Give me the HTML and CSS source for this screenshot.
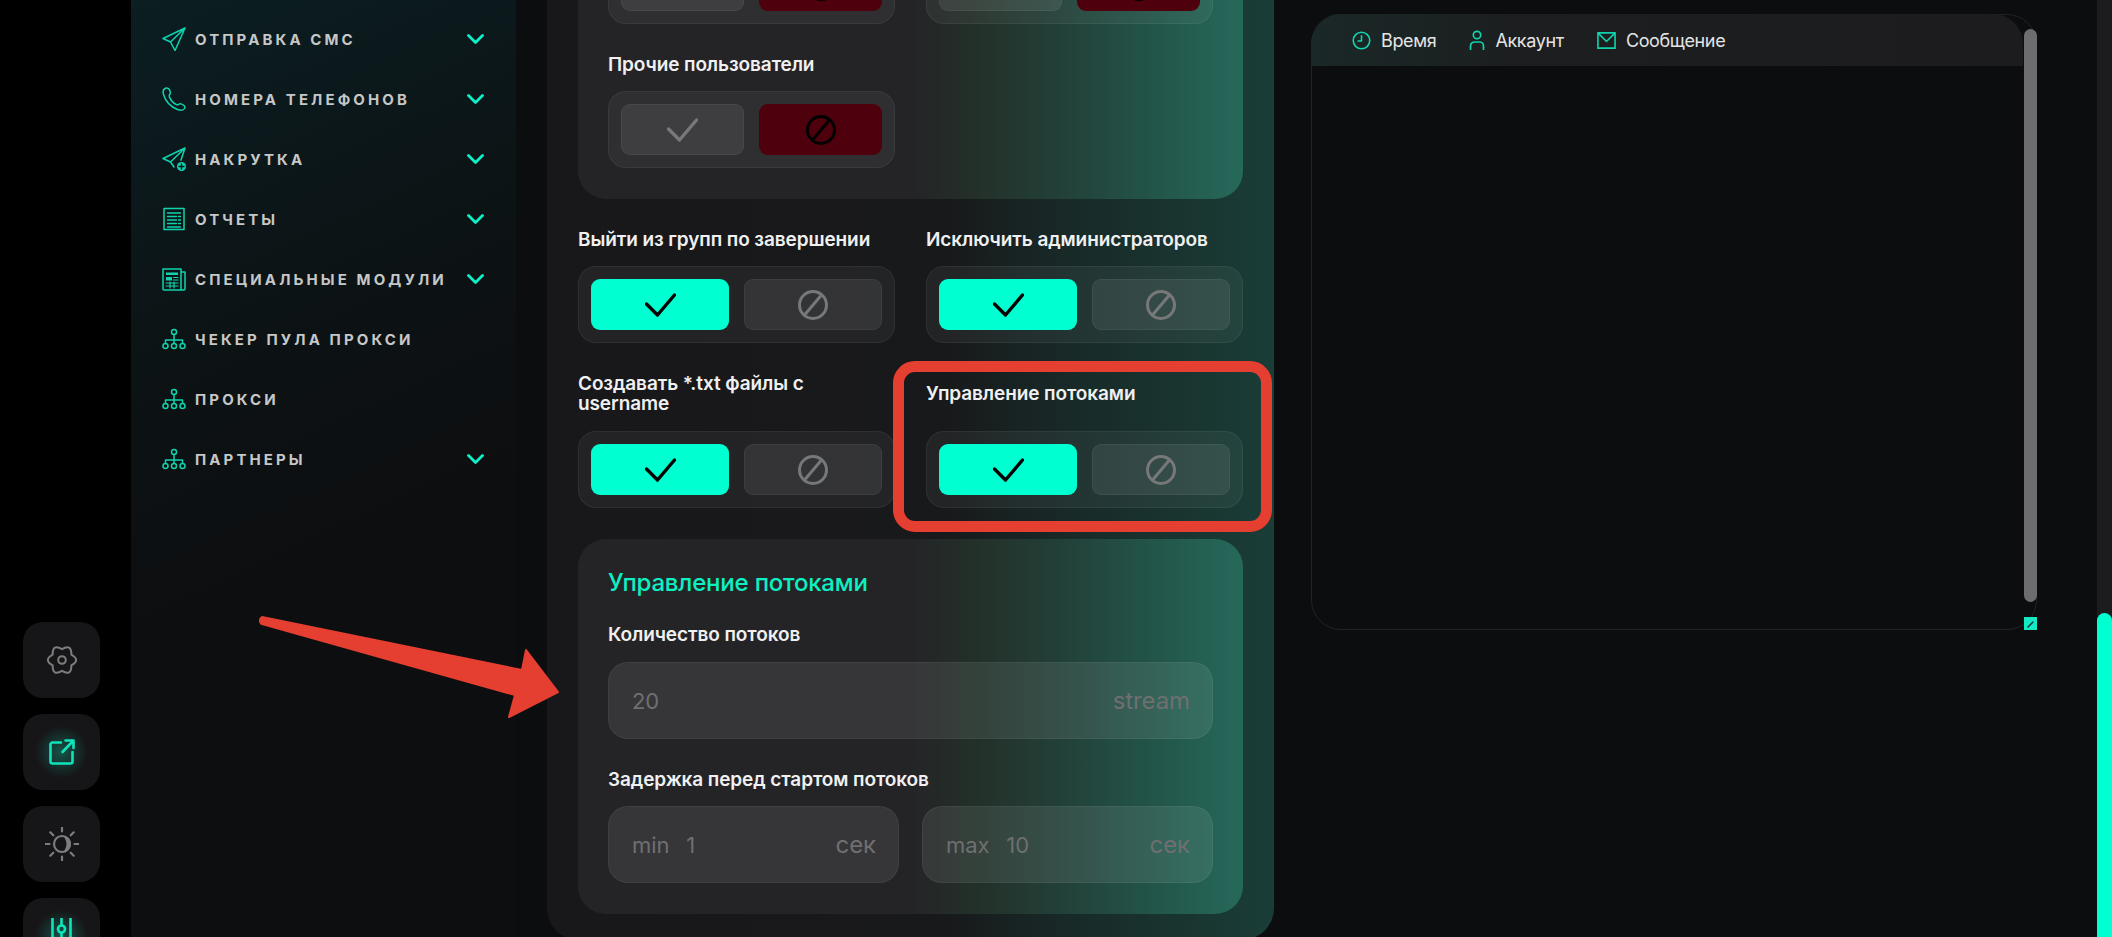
FILE: index.html
```html
<!DOCTYPE html>
<html lang="ru">
<head>
<meta charset="utf-8">
<title>Управление потоками</title>
<link rel="stylesheet" href="styles.css">
</head>
<body>
<svg class="defs" width="0" height="0" aria-hidden="true">
  <symbol id="i-plane" viewBox="0 0 24 24"><path d="M23 1 1 11.500 8.500 15 13 23.500ZM23 1 8.500 15"/></symbol>
  <symbol id="i-phone" viewBox="0 0 24 24"><path d="M3.500 1.200C1.200 2.200.6 4.500 1.500 7.500c2 6.500 7.500 12.500 14 15 3 1 6 .8 7-1 1-2-.5-3.600-3.500-4.600-2.200-.7-2.700 1.600-4.600.7-3-1.500-5.700-4.500-7.100-8-.7-1.900 1.500-2.200 1-4.500C7.700 2 5.500.4 3.500 1.200Z"/></symbol>
  <symbol id="i-plane-plus" viewBox="0 0 24 24"><path d="M23 1 1 11.500 8.500 15 12 20M23 1 8.500 15M23 1l-4 12"/><circle class="solid" cx="19.500" cy="19.500" r="4.500"/><path class="cut" d="M19.500 17v5M17 19.500h5"/></symbol>
  <symbol id="i-receipt" viewBox="0 0 24 24"><path d="M2 1.500h20v21H2Z" stroke-dasharray="2 .3"/><path d="M5.500 6h13M5.500 9.500h9M5.500 13h9M5.500 16.500h9M5.500 20h13M16.500 9.500h2M16.500 13h2M16.500 16.500h2" stroke-width="1.300"/></symbol>
  <symbol id="i-news" viewBox="0 0 24 24"><path d="M1 2h18v21H2a1 1 0 0 1-1-1ZM19 5h4v17a1 1 0 0 1-1 1h-3"/><path class="solid" d="M4 5.500h12v2.500H4ZM4 10h6v3.500H4Z"/><path d="M11.500 10.500H16M11.500 13H16M4 16h12M4 19h12M8 15v6M12 15v6" stroke-width="1.200"/></symbol>
  <symbol id="i-org" viewBox="0 0 24 24"><circle cx="12" cy="5" r="2.500"/><path d="M12 7.500V13M3.500 16v-3h17v3M12 13v3"/><circle cx="3.500" cy="19" r="2.500"/><circle cx="12" cy="19" r="2.500"/><circle cx="20.500" cy="19" r="2.500"/></symbol>
  <symbol id="i-check" viewBox="0 0 31 24"><path d="M1.500 11 12.500 22 29.500 2"/></symbol>
  <symbol id="i-ban" viewBox="0 0 30 30"><circle cx="15" cy="15" r="13.500"/><path d="M23.500 5 6.500 25"/></symbol>
  <symbol id="i-gear" viewBox="0 0 30 30"><path d="M24.350 9.600Q34 15 24.350 20.400 24.500 31.450 15 25.800 5.500 31.450 5.650 20.400-4 15 5.650 9.600 5.500-1.450 15 4.200 24.500-1.450 24.350 9.600Z"/><circle cx="15" cy="15" r="3.800"/></symbol>
  <symbol id="i-link" viewBox="0 0 26 26"><path d="M12 3.500H3.500a2 2 0 0 0-2 2v17a2 2 0 0 0 2 2h18a2 2 0 0 0 2-2V13"/><path d="M13.500 13 24 2M16.500 1.500H24.500V9"/></symbol>
  <symbol id="i-sun" viewBox="0 0 34 34"><circle cx="17" cy="17" r="8"/><path class="solid" d="M18 9a8 8 0 0 1 0 16 11 11 0 0 0 0-16Z"/><path d="M17 .5v4M17 29.500v4M.5 17h4M29.500 17h4M5.300 5.300l3 3M25.700 25.700l3 3M5.300 28.700l3-3M25.700 8.300l3-3"/></symbol>
  <symbol id="i-sliders" viewBox="0 0 26 26"><path d="M3.500 0v19M12.500 0v7M12.500 15v11M21.500 0v19"/><circle cx="12.500" cy="11" r="3.500"/><circle class="solid" cx="3.500" cy="22" r="3.500"/><circle class="solid" cx="21.500" cy="22" r="3.500"/></symbol>
  <symbol id="i-clock" viewBox="0 0 20 20"><circle cx="10" cy="10" r="8.700"/><path d="M10 5v5.500H6.500"/></symbol>
  <symbol id="i-user" viewBox="0 0 16 20"><circle cx="8" cy="5" r="3.700"/><path d="M1.500 19.500V16a4 4 0 0 1 4-4h5a4 4 0 0 1 4 4v3.500"/></symbol>
  <symbol id="i-mail" viewBox="0 0 20 20"><path d="M1 2h18v16H1ZM1.500 2.500 10 11l8.500-8.500"/></symbol>
  <symbol id="i-chev" viewBox="0 0 17 11"><path d="M1.500 1.500 8.500 8.500 15.500 1.500"/></symbol>
</svg>

<div class="app">
  <nav class="rail">
    <a class="rail-btn"><svg class="rail-ico gear"><use href="#i-gear"/></svg></a>
    <a class="rail-btn active"><svg class="rail-ico link"><use href="#i-link"/></svg></a>
    <a class="rail-btn"><svg class="rail-ico sun"><use href="#i-sun"/></svg></a>
    <a class="rail-btn active top"><svg class="rail-ico link"><use href="#i-sliders"/></svg></a>
  </nav>

  <aside class="side">
    <a class="item"><svg class="ico"><use href="#i-plane"/></svg><span>Отправка СМС</span><svg class="chev"><use href="#i-chev"/></svg></a>
    <a class="item"><svg class="ico"><use href="#i-phone"/></svg><span>Номера телефонов</span><svg class="chev"><use href="#i-chev"/></svg></a>
    <a class="item"><svg class="ico"><use href="#i-plane-plus"/></svg><span>Накрутка</span><svg class="chev"><use href="#i-chev"/></svg></a>
    <a class="item"><svg class="ico"><use href="#i-receipt"/></svg><span>Отчеты</span><svg class="chev"><use href="#i-chev"/></svg></a>
    <a class="item"><svg class="ico"><use href="#i-news"/></svg><span>Специальные модули</span><svg class="chev"><use href="#i-chev"/></svg></a>
    <a class="item"><svg class="ico"><use href="#i-org"/></svg><span>Чекер пула прокси</span></a>
    <a class="item"><svg class="ico"><use href="#i-org"/></svg><span>Прокси</span></a>
    <a class="item"><svg class="ico"><use href="#i-org"/></svg><span>Партнеры</span><svg class="chev"><use href="#i-chev"/></svg></a>
  </aside>

  <main class="main">
    <section class="panel">
      <div class="card rows">
        <div class="grid">
          <div class="seg"><button class="opt off"><svg class="chk"><use href="#i-check"/></svg></button><button class="opt deny"><svg class="ban"><use href="#i-ban"/></svg></button></div>
          <div class="seg"><button class="opt off"><svg class="chk"><use href="#i-check"/></svg></button><button class="opt deny"><svg class="ban"><use href="#i-ban"/></svg></button></div>
        </div>
        <div class="grid">
          <div class="field">
            <div class="label">Прочие пользователи</div>
            <div class="seg"><button class="opt off"><svg class="chk"><use href="#i-check"/></svg></button><button class="opt deny"><svg class="ban"><use href="#i-ban"/></svg></button></div>
          </div>
        </div>
      </div>

      <div class="grid outer">
        <div class="field">
          <div class="label">Выйти из групп по завершении</div>
          <div class="seg"><button class="opt on"><svg class="chk"><use href="#i-check"/></svg></button><button class="opt off"><svg class="ban"><use href="#i-ban"/></svg></button></div>
        </div>
        <div class="field">
          <div class="label">Исключить администраторов</div>
          <div class="seg"><button class="opt on"><svg class="chk"><use href="#i-check"/></svg></button><button class="opt off"><svg class="ban"><use href="#i-ban"/></svg></button></div>
        </div>
      </div>

      <div class="grid outer">
        <div class="field">
          <div class="label two">Создавать *.txt файлы с<br>username</div>
          <div class="seg"><button class="opt on"><svg class="chk"><use href="#i-check"/></svg></button><button class="opt off"><svg class="ban"><use href="#i-ban"/></svg></button></div>
        </div>
        <div class="field marked">
          <div class="label two mid">Управление потоками</div>
          <div class="seg"><button class="opt on"><svg class="chk"><use href="#i-check"/></svg></button><button class="opt off"><svg class="ban"><use href="#i-ban"/></svg></button></div>
        </div>
      </div>

      <div class="card">
        <h2 class="title">Управление потоками</h2>
        <div class="label lead">Количество потоков</div>
        <div class="input"><span class="val">20</span><span class="unit">stream</span></div>
        <div class="label gap-top">Задержка перед стартом потоков</div>
        <div class="grid tight">
          <div class="input"><span class="pre">min</span><span class="val">1</span><span class="unit">сек</span></div>
          <div class="input"><span class="pre">max</span><span class="val">10</span><span class="unit">сек</span></div>
        </div>
      </div>
    </section>

    <section class="log">
      <header class="tabs">
        <span class="tab"><svg class="t-ico clock"><use href="#i-clock"/></svg>Время</span>
        <span class="tab"><svg class="t-ico user"><use href="#i-user"/></svg>Аккаунт</span>
        <span class="tab"><svg class="t-ico mail"><use href="#i-mail"/></svg>Сообщение</span>
      </header>
      <div class="thumb"></div>
      <div class="grip"><svg viewBox="0 0 13 13"><path d="M4 10 9 5"/></svg></div>
    </section>
  </main>

  <div class="pagebar"><div class="pagethumb"></div></div>
</div>

<svg class="arrow" viewBox="0 0 320 120" aria-hidden="true"><path d="M3 2 263 55 267 35 299 77 250 102 256 80 3 9a4 4 0 0 1 0-7Z"/></svg>
</body>
</html>
```
FILE: styles.css
```css
* { box-sizing: border-box; }
html, body { margin: 0; height: 100%; background: #000; overflow: hidden; }
body { font-family: Inter, "Noto Sans", sans-serif; color: #e9e9ea; position: relative; }
.defs { position: absolute; }
svg { fill: none; stroke: currentColor; stroke-linecap: round; stroke-linejoin: round; display: block; }
.solid { fill: currentColor; stroke: none; }
.cut { stroke: #0c1416; stroke-width: 1.4; }

.app { display: flex; height: 937px; overflow: hidden; }

/* left rail */
.rail { width: 131px; flex: none; background: #000; display: flex; flex-direction: column; align-items: flex-start; gap: 16px; padding: 622px 0 0 23px; }
.rail-btn { width: 77px; height: 76px; flex: none; border-radius: 20px; background: #161618; display: flex; align-items: center; justify-content: center; color: #7d7d7d; }
.rail-btn.active { color: #0fe3ba; background: radial-gradient(circle at 50% 50%, rgba(15,227,186,.3), rgba(15,227,186,0) 48%), #161618; }
.rail-btn.top { align-items: flex-start; padding-top: 20px; }
.rail-ico { stroke-width: 2; }
.rail-ico.gear { width: 30px; height: 30px; }
.rail-ico.link { width: 26px; height: 26px; stroke-width: 2.600; }
.rail-ico.sun { width: 34px; height: 34px; stroke-width: 2.200; }

/* sidebar */
.side { width: 385px; flex: none; padding: 9px 32px 0 31px; background: linear-gradient(155deg, #0b1e22 0%, #0c1416 30%, #0d0e10 58%); }
.item { height: 60px; display: flex; align-items: center; gap: 9px; color: #c6c7c7; font-size: 15px; font-weight: 700; letter-spacing: 3.100px; text-transform: uppercase; white-space: nowrap; }
.ico { width: 24px; height: 24px; flex: none; color: #0fd3ad; stroke-width: 1.500; }
.chev { width: 17px; height: 11px; margin-left: auto; color: #0ff0c8; stroke-width: 2.800; }

/* main */
.main { flex: 1; display: flex; align-items: flex-start; background: #0c0d0e; padding-left: 31px; gap: 37px; }

.panel { width: 727px; flex: none; margin-top: -83px; padding: 0 31px 26px; display: flex; flex-direction: column; gap: 31px; border-radius: 0 0 32px 32px; background: linear-gradient(90deg, #18181b 0%, #18191b 55%, #182a28 72%, #1a3d37 100%); }
.card { border-radius: 28px; padding: 31px 30px; background: linear-gradient(90deg, #242427 0%, #242427 50%, #233029 60%, #22423a 74%, #23574b 88%, #25695b 100%); }
.rows { display: flex; flex-direction: column; gap: 31px; padding-top: 30px; }
.grid { display: grid; grid-template-columns: 1fr 1fr; column-gap: 31px; }
.outer { gap: 31px; }
.tight { column-gap: 23px; }

.label { font-size: 19px; line-height: 20px; font-weight: 600; letter-spacing: -.1px; color: #f0f0f1; margin-bottom: 16px; white-space: nowrap; }
.label.two { min-height: 40px; margin-bottom: 17px; }
.label.mid { display: flex; align-items: center; }
.label.lead { margin-bottom: 17px; }
.gap-top { margin-top: 31px; }
.field { min-width: 0; }

.seg { height: 77px; padding: 12px 12px; display: grid; grid-template-columns: 1fr 1fr; gap: 15px; border-radius: 18px; border: 1px solid rgba(255,255,255,.055); background: rgba(255,255,255,.05); }
.opt { padding: 0; margin: 0; border-radius: 9px; display: flex; align-items: center; justify-content: center; border: 1px solid transparent; font: inherit; }
.opt.on { background: #00ffd1; color: #000; }
.opt.off { background: rgba(255,255,255,.075); border-color: rgba(255,255,255,.05); color: #77787a; }
.opt.deny { background: #4e000c; color: #000; }
.chk { width: 31px; height: 24px; stroke-width: 3.400; }
.ban { width: 30px; height: 30px; stroke-width: 3; }

.marked { position: relative; }
.marked::after { content: ""; position: absolute; top: -13px; left: -33px; right: -29px; bottom: -24px; border: 11px solid #e53f31; border-radius: 22px; pointer-events: none; }

.title { margin: 0 0 29px; font-size: 24px; line-height: 26px; font-weight: 500; letter-spacing: -.2px; color: #0df0c3; }
.input { height: 77px; display: flex; align-items: center; padding: 0 22px 0 23px; border-radius: 20px; border: 1px solid rgba(255,255,255,.05); background: rgba(255,255,255,.085); font-size: 22px; color: #6f6f71; letter-spacing: -.1px; }
.pre { margin-right: 17px; }
.unit { margin-left: auto; font-size: 24px; }

/* log */
.log { width: 726px; height: 616px; margin-top: 14px; flex: none; position: relative; border: 1px solid #232325; border-radius: 30px; }
.tabs { height: 52px; margin: -1px 13px 0 -1px; padding-left: 41px; display: flex; align-items: center; gap: 33px; border-radius: 30px 30px 0 0; background: linear-gradient(90deg, #1a2827 0%, #1c1e1f 30%, #1c1c1e 100%); font-size: 18px; letter-spacing: -.35px; color: #e4e4e5; }
.tab { display: flex; align-items: center; gap: 10px; }
.t-ico { flex: none; color: #0fd3ad; stroke-width: 1.700; }
.t-ico.clock { width: 19px; height: 19px; }
.t-ico.user { width: 16px; height: 20px; }
.t-ico.mail { width: 19px; height: 19px; stroke-linejoin: miter; }
.thumb { position: absolute; top: 14px; right: -1px; width: 13px; height: 573px; border-radius: 7px; background: #6d6d6f; }
.grip { position: absolute; right: -1px; bottom: -1px; width: 13px; height: 13px; background: #14e8c4; }
.grip svg { width: 13px; height: 13px; stroke: #0c3a38; stroke-width: 1.500; }

/* page scrollbar */
.pagebar { width: 15px; flex: none; background: #1c1c1f; padding-top: 613px; }
.pagethumb { height: 324px; background: #00ffd1; border-radius: 8px 8px 0 0; }

/* annotation */
.arrow { position: absolute; left: 259px; top: 615px; width: 320px; height: 120px; stroke: #e53f31; stroke-width: 2; fill: #e53f31; }
```
